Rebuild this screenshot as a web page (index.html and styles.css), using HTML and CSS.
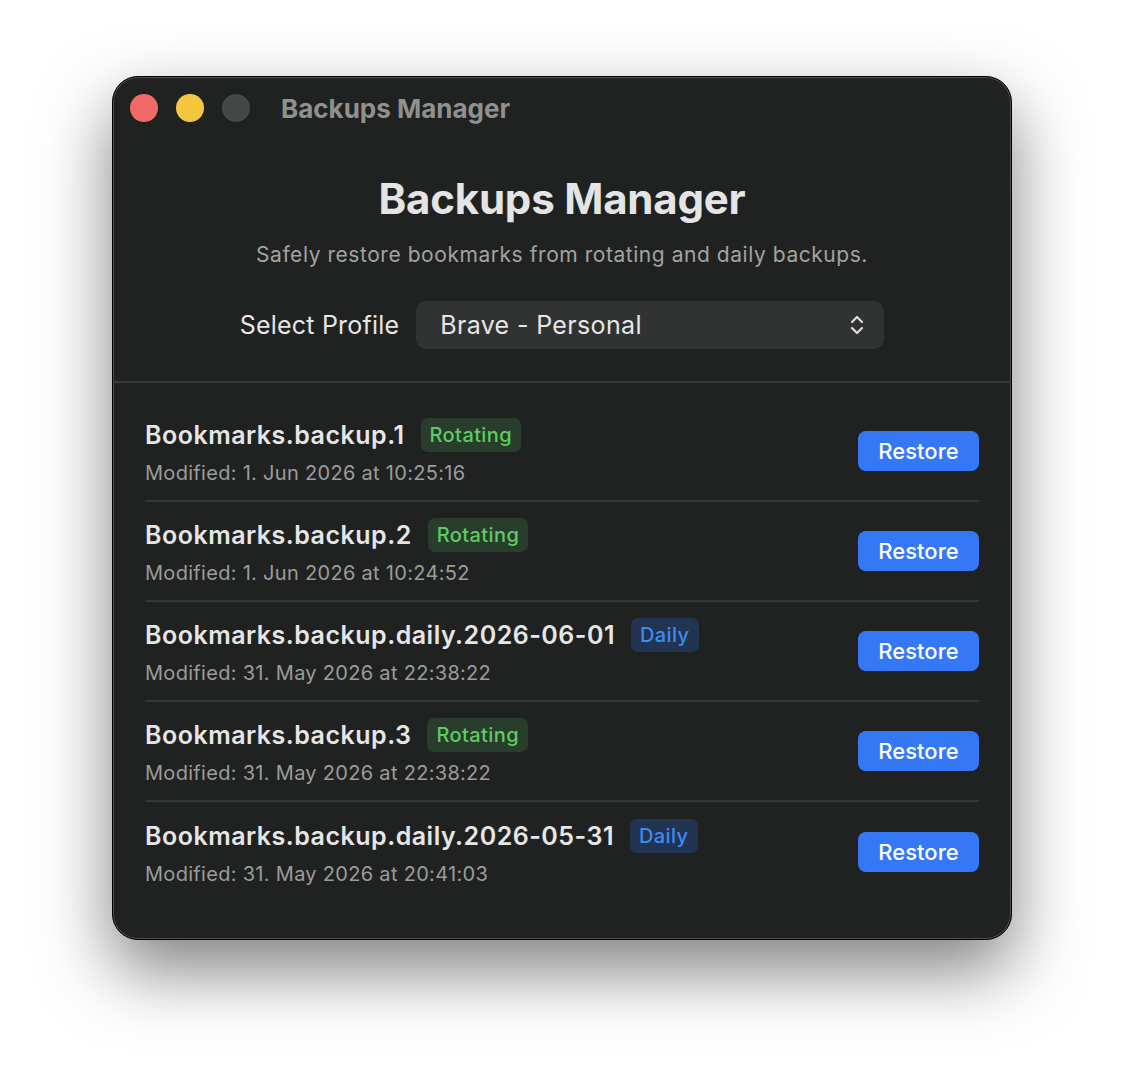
FILE: index.html
```html
<!DOCTYPE html>
<html>
<head>
    <title>Backups Manager</title>
    <link rel="stylesheet" href="styles.css">
</head>
<body>
    <div class="window">
        <div class="titlebar">
            <div class="lights">
                <span class="light red"></span>
                <span class="light yellow"></span>
                <span class="light gray"></span>
            </div>
            <div class="window-title">Backups Manager</div>
        </div>

        <div class="header">
            <h1>Backups Manager</h1>
            <p class="subtitle">Safely restore bookmarks from rotating and daily backups.</p>
            <div class="profile">
                <label>Select Profile</label>
                <div class="select">
                    <span>Brave - Personal</span>
                    <svg class="chevrons" width="16" height="24" viewBox="0 0 16 24">
                        <path d="M3 9 L8 4 L13 9" fill="none" stroke="#dcdcdc" stroke-width="2.2" stroke-linecap="round" stroke-linejoin="round"/>
                        <path d="M3 15 L8 20 L13 15" fill="none" stroke="#dcdcdc" stroke-width="2.2" stroke-linecap="round" stroke-linejoin="round"/>
                    </svg>
                </div>
            </div>
        </div>

        <div class="list">
            <div class="row">
                <div class="info">
                    <div class="name">Bookmarks.backup.1 <span class="badge rotating">Rotating</span></div>
                    <div class="modified">Modified: 1. Jun 2026 at 10:25:16</div>
                </div>
                <button>Restore</button>
            </div>
            <div class="row">
                <div class="info">
                    <div class="name">Bookmarks.backup.2 <span class="badge rotating">Rotating</span></div>
                    <div class="modified">Modified: 1. Jun 2026 at 10:24:52</div>
                </div>
                <button>Restore</button>
            </div>
            <div class="row">
                <div class="info">
                    <div class="name">Bookmarks.backup.daily.2026-06-01 <span class="badge daily">Daily</span></div>
                    <div class="modified">Modified: 31. May 2026 at 22:38:22</div>
                </div>
                <button>Restore</button>
            </div>
            <div class="row">
                <div class="info">
                    <div class="name">Bookmarks.backup.3 <span class="badge rotating">Rotating</span></div>
                    <div class="modified">Modified: 31. May 2026 at 22:38:22</div>
                </div>
                <button>Restore</button>
            </div>
            <div class="row">
                <div class="info">
                    <div class="name">Bookmarks.backup.daily.2026-05-31 <span class="badge daily">Daily</span></div>
                    <div class="modified">Modified: 31. May 2026 at 20:41:03</div>
                </div>
                <button>Restore</button>
            </div>
        </div>
    </div>
</body>
</html>
```

FILE: styles.css
```css
body {
    font-family: Inter, "Noto Sans", sans-serif;
    background-color: #ffffff;
    margin: 0;
    padding: 76px 0 148px 112px;
}

.window {
    width: 900px;
    height: 864px;
    box-sizing: border-box;
    background-color: #202221;
    border: 1px solid #000;
    border-radius: 26px;
    box-shadow: inset 0 0 0 1px #4d4f4e, 0 30px 70px rgba(0, 0, 0, 0.5);
    overflow: hidden;
}

.titlebar {
    display: flex;
    align-items: center;
    height: 62px;
    padding-left: 17px;
}

.lights {
    display: flex;
    gap: 18px;
}

.light {
    width: 28px;
    height: 28px;
    border-radius: 50%;
}

.red { background-color: #ef6a67; }
.yellow { background-color: #f5c63f; }
.gray { background-color: #464847; }

.window-title {
    margin-left: 31px;
    font-size: 26px;
    font-weight: 700;
    color: #8f908f;
}

.header {
    display: flex;
    flex-direction: column;
    align-items: center;
    padding-top: 37px;
    height: 205px;
    border-bottom: 2px solid #393b3a;
}

h1 {
    margin: 0;
    font-size: 42px;
    line-height: 46px;
    font-weight: 700;
    color: #e4e4e4;
    letter-spacing: -0.2px;
}

.subtitle {
    margin: 20px 0 0 0;
    font-size: 21px;
    line-height: 26px;
    letter-spacing: 0.55px;
    color: #a2a3a2;
}

.profile {
    display: flex;
    align-items: center;
    gap: 17px;
    margin-top: 33px;
}

label {
    font-size: 25px;
    letter-spacing: 0.2px;
    color: #e6e6e6;
}

.select {
    display: flex;
    align-items: center;
    justify-content: space-between;
    width: 468px;
    height: 48px;
    box-sizing: border-box;
    padding: 0 19px 0 24px;
    background-color: #313332;
    border-radius: 10px;
    font-size: 25px;
    letter-spacing: 0.35px;
    color: #e6e6e6;
}

.list {
    padding: 19px 32px 0 32px;
}

.row {
    display: flex;
    align-items: center;
    justify-content: space-between;
    height: 100px;
    box-sizing: border-box;
    border-bottom: 2px solid #353736;
}

.row:last-child {
    border-bottom: none;
}

.name {
    display: flex;
    align-items: center;
    gap: 16px;
    font-size: 25px;
    line-height: 34px;
    font-weight: 600;
    letter-spacing: 0.5px;
    color: #e6e6e6;
}

.badge {
    padding: 4px 9px;
    border-radius: 7px;
    font-size: 20px;
    line-height: 26px;
    font-weight: 500;
    letter-spacing: 0.4px;
}

.rotating {
    background-color: #283d2b;
    color: #5fcb62;
}

.daily {
    background-color: #213451;
    color: #3d8cf4;
}

.modified {
    margin-top: 9px;
    font-size: 20px;
    line-height: 24px;
    letter-spacing: 0.3px;
    color: #9b9c9b;
}

button {
    width: 121px;
    height: 40px;
    background-color: #3478f6;
    color: #fff;
    border: none;
    border-radius: 8px;
    font-family: Inter, sans-serif;
    font-size: 22px;
    font-weight: 500;
    cursor: pointer;
}
```
